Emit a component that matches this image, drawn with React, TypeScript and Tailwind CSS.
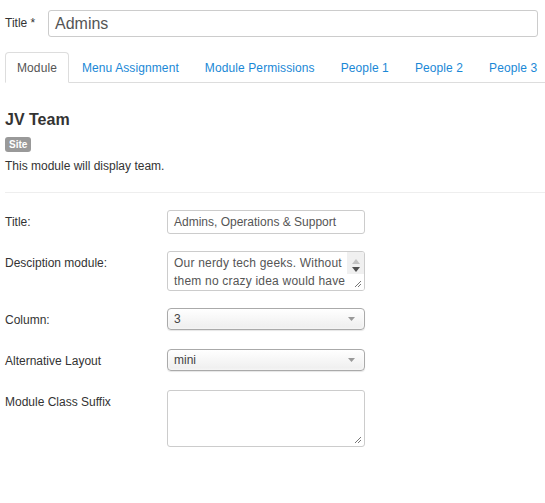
import React from 'react'

const tabs = ['Module', 'Menu Assignment', 'Module Permissions', 'People 1', 'People 2', 'People 3']

function Caret() {
  return (
    <svg width="7" height="4" viewBox="0 0 7 4" className="shrink-0">
      <path d="M0 0h7L3.5 4z" fill="#999" />
    </svg>
  )
}

function FakeSelect({ value }: { value: string }) {
  return (
    <div className="flex h-[22px] w-[198px] items-center justify-between rounded-[4px] border border-[#aaa] bg-gradient-to-b from-white to-[#eee] pl-[6px] pr-[9px] text-[12px] text-[#444] shadow-[0_0_3px_white_inset,0_1px_1px_rgba(0,0,0,0.1)]">
      <span>{value}</span>
      <Caret />
    </div>
  )
}

function Grip() {
  return (
    <svg width="9" height="9" viewBox="0 0 9 9" className="absolute bottom-[2px] right-[2px]">
      <path d="M8 2L2 8M8 5L5 8" stroke="#777" strokeWidth="1" />
    </svg>
  )
}

function Row({ label, children }: { label: string; children: React.ReactNode }) {
  return (
    <div className="flex items-start">
      <div className="w-[162px] shrink-0 pt-[3px] leading-[18px]">{label}</div>
      {children}
    </div>
  )
}

export default function App() {
  return (
    <div
      className="min-h-[503px] bg-white pl-[5px] pt-[10px] text-[12px] text-[#333]"
      style={{ fontFamily: '"Liberation Sans", Arial, sans-serif' }}
    >
      {/* Title */}
      <div className="flex items-center pr-[7px]">
        <label className="w-[43px] shrink-0 pb-[2px]">Title *</label>
        <div className="flex h-[27px] flex-1 items-center rounded-[3px] border border-[#ccc] px-[6px] text-[16px] text-[#555]">
          Admins
        </div>
      </div>

      {/* Tabs */}
      <ul className="mt-[15px] flex border-b border-[#ddd] whitespace-nowrap tracking-[0.1px]">
        {tabs.map((t, i) => (
          <li
            key={t}
            className={
              i === 0
                ? '-mb-px flex h-[31px] items-center rounded-t-[4px] border border-[#ddd] border-b-white bg-white px-[11px] text-[#555]'
                : '-mb-px flex h-[31px] items-center border border-transparent px-[12px] text-[#1a88d6]'
            }
          >
            {t}
          </li>
        ))}
      </ul>

      {/* Module info */}
      <h3 className="mt-[27px] text-[16px] font-bold leading-[20px]">JV Team</h3>
      <span className="mt-[7px] inline-block rounded-[3px] bg-[#999] px-[4px] text-[10px] font-bold leading-[15px] text-white">
        Site
      </span>
      <p className="mt-[4px] leading-[18px]">This module will display team.</p>
      <hr className="mt-[17px] border-0 border-t border-[#eee]" />

      {/* Form */}
      <div className="mt-[17px] flex flex-col gap-[17px]">
        <Row label="Title:">
          <div className="flex h-[24px] w-[198px] items-center rounded-[3px] border border-[#ccc] px-[6px] text-[#555]">
            Admins, Operations &amp; Support
          </div>
        </Row>

        <Row label="Desciption module:">
          <div className="relative flex h-[40px] w-[198px] overflow-hidden rounded-[3px] border border-[#ccc] text-[#555]">
            <div className="flex-1 overflow-hidden pl-[6px] pt-[2px] leading-[18px] whitespace-nowrap tracking-[0.2px]">
              Our nerdy tech geeks. Without
              <br />
              them no crazy idea would have
            </div>
            <div className="flex w-[17px] flex-col bg-[#f0f0f0]">
              <div className="flex h-[12px] items-end justify-center">
                <svg width="8" height="5" viewBox="0 0 8 5">
                  <path d="M0 5h8L4 0z" fill="#c2c2c2" />
                </svg>
              </div>
              <div className="flex h-[10px] items-center justify-center">
                <svg width="8" height="5" viewBox="0 0 8 5">
                  <path d="M0 0h8L4 5z" fill="#505050" />
                </svg>
              </div>
              <div className="flex-1 bg-white" />
            </div>
            <Grip />
          </div>
        </Row>

        <div className="flex flex-col gap-[19px]">
          <Row label="Column:">
            <FakeSelect value="3" />
          </Row>

          <Row label="Alternative Layout">
            <FakeSelect value="mini" />
          </Row>

          <Row label="Module Class Suffix">
            <div className="relative h-[57px] w-[198px] rounded-[3px] border border-[#ccc]">
              <Grip />
            </div>
          </Row>
        </div>
      </div>
    </div>
  )
}
